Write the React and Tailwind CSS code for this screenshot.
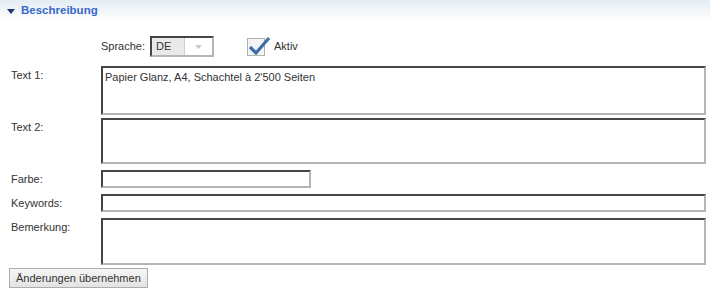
import React from 'react';

const inset =
  'border-2 border-t-[#454545] border-l-[#454545] border-b-[#b5b5b5] border-r-[#b5b5b5] bg-white';

const Row = ({ label, children, className = '' }) => (
  <div className={`flex ${className}`}>
    <div className="w-[101px] shrink-0 pl-[11px] pt-[3px] leading-[13px]">{label}</div>
    <div className="flex-1 pr-[4px]">{children}</div>
  </div>
);

const App = () => {
  return (
    <div
      className="w-[710px] h-[293px] bg-white text-[11px] text-[#333]"
      style={{ fontFamily: '"Liberation Sans", Arial, sans-serif' }}
    >
      <div className="h-[22px] flex items-center pl-[7px] bg-gradient-to-b from-[#e4edf5] to-white">
        <svg width="8" height="5" viewBox="0 0 8 5" className="mr-[6px]">
          <polygon points="0,0 8,0 4,5" fill="#1e3a6e" />
        </svg>
        <span className="font-bold text-[11.5px] text-[#3869c9]">Beschreibung</span>
      </div>

      <div className="flex items-center h-[23px] mt-[13px] pl-[101px]">
        <span className="w-[49px]">Sprache:</span>
        <div className={`${inset} flex h-[21px] w-[64px]`}>
          <div className="w-[33px] bg-[#e9e9e9] border-r border-[#d0d0d0] pl-[4px] leading-[17px]">DE</div>
          <div className="flex-1 flex items-center justify-center">
            <svg width="7" height="4" viewBox="0 0 7 4">
              <polygon points="0,0 7,0 3.5,4" fill="#c8c8c8" />
            </svg>
          </div>
        </div>
        <div className="relative ml-[33px] w-[18px] h-[18px] border border-[#b0b0b0] bg-[#f4f4f4]">
          <svg width="24" height="22" viewBox="0 0 24 22" className="absolute left-[-1px] top-[-4px]">
            <path d="M3 12 L9 18 L22 3" fill="none" stroke="#3c6ea7" strokeWidth="3.2" />
          </svg>
        </div>
        <span className="ml-[9px]">Aktiv</span>
      </div>

      <Row label="Text 1:" className="mt-[8px]">
        <div className={`${inset} h-[49px] px-[2px] pt-[3px] leading-[13px]`}>Papier Glanz, A4, Schachtel à 2'500 Seiten</div>
      </Row>
      <Row label="Text 2:" className="mt-[3px]">
        <div className={`${inset} h-[46px]`} />
      </Row>
      <Row label="Farbe:" className="mt-[6px]">
        <div className={`${inset} h-[18px] w-[210px]`} />
      </Row>
      <Row label="Keywords:" className="mt-[6px]">
        <div className={`${inset} h-[18px]`} />
      </Row>
      <Row label="Bemerkung:" className="mt-[6px]">
        <div className={`${inset} h-[47px]`} />
      </Row>

      <div className="pl-[9px] mt-[3px]">
        <button className="h-[20px] px-[6px] border border-[#adadad] bg-gradient-to-b from-[#f6f6f6] to-[#e3e3e3] text-[#333] text-[11px]">
          Änderungen übernehmen
        </button>
      </div>
    </div>
  );
};

export default App;
